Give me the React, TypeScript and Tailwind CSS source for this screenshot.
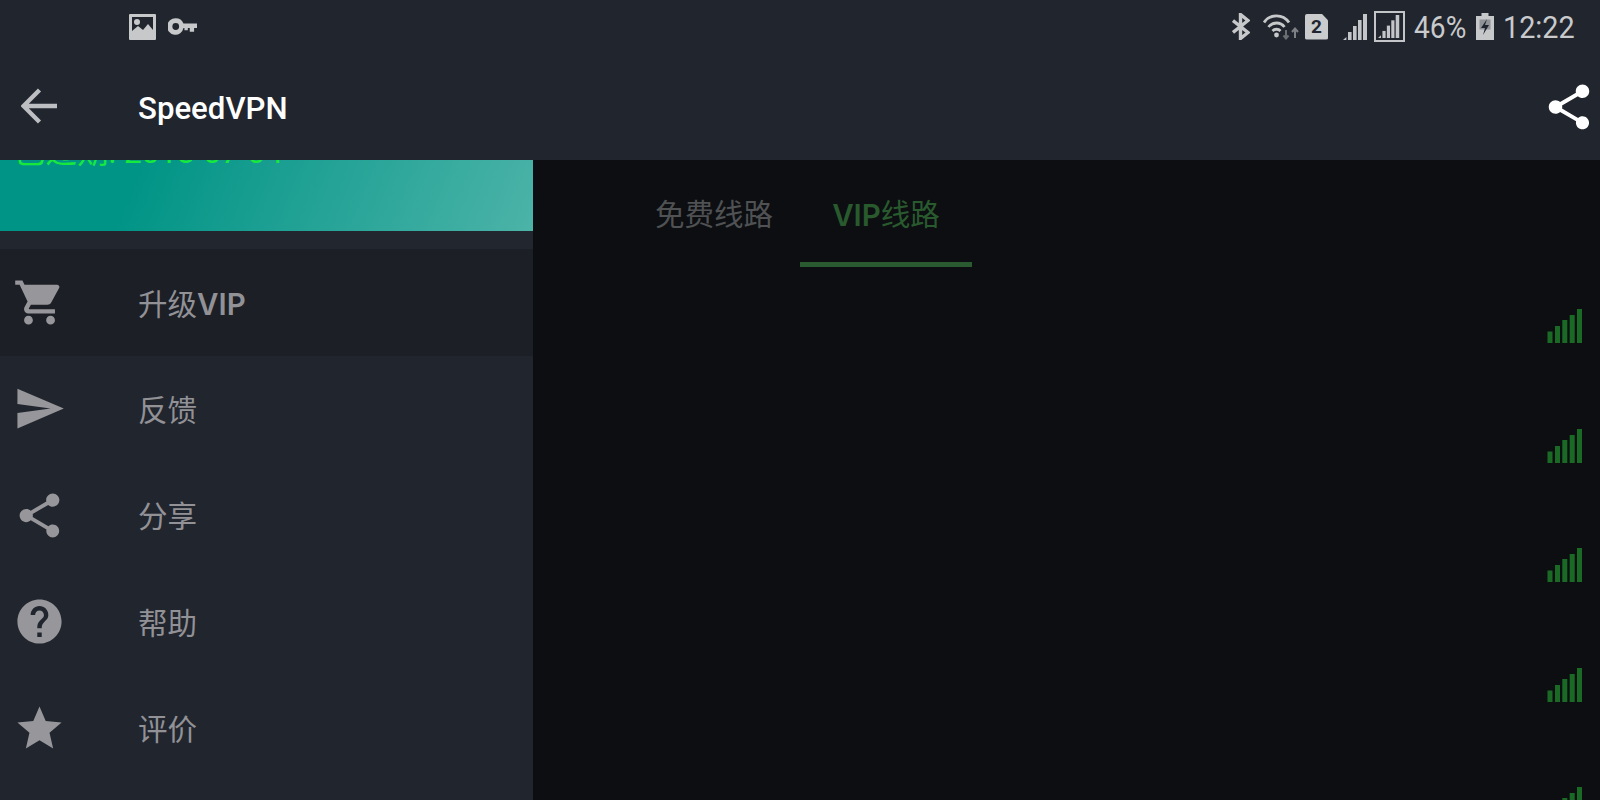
const sharePath = "M18 16.08c-.76 0-1.44.3-1.96.77L8.91 12.7c.05-.23.09-.46.09-.7s-.04-.47-.09-.7l7.05-4.11c.54.5 1.25.81 2.04.81 1.66 0 3-1.34 3-3s-1.34-3-3-3-3 1.34-3 3c0 .24.04.47.09.7L8.04 9.81C7.5 9.31 6.79 9 6 9c-1.66 0-3 1.34-3 3s1.34 3 3 3c.79 0 1.5-.31 2.04-.81l7.12 4.16c-.05.21-.08.43-.08.65 0 1.61 1.31 2.92 2.92 2.92 1.61 0 2.92-1.31 2.92-2.92s-1.31-2.92-2.92-2.92z"

const menu = [
    {
        label: "升级",
        extra: "VIP",
        active: true,
        path: "M7 18c-1.1 0-1.99.9-1.99 2S5.9 22 7 22s2-.9 2-2-.9-2-2-2zM1 2v2h2l3.6 7.59-1.35 2.45c-.16.28-.25.61-.25.96 0 1.1.9 2 2 2h12v-2H7.42c-.14 0-.25-.11-.25-.25l.03-.12.9-1.63h7.45c.75 0 1.41-.41 1.75-1.03l3.58-6.49c.08-.14.12-.31.12-.48 0-.55-.45-1-1-1H5.21l-.94-2H1zm16 16c-1.1 0-1.99.9-1.99 2s.89 2 1.99 2 2-.9 2-2-.9-2-2-2z",
    },
    { label: "反馈", path: "M2.01 21L23 12 2.01 3 2 10l15 2-15 2z" },
    { label: "分享", path: sharePath },
    {
        label: "帮助",
        path: "M12 2C6.48 2 2 6.48 2 12s4.48 10 10 10 10-4.48 10-10S17.52 2 12 2zm1 17h-2v-2h2v2zm2.07-7.75l-.9.92C13.45 12.9 13 13.5 13 15h-2v-.5c0-1.1.45-2.1 1.17-2.83l1.24-1.26c.37-.36.59-.86.59-1.41 0-1.1-.9-2-2-2s-2 .9-2 2H8c0-2.21 1.79-4 4-4s4 1.79 4 4c0 .88-.36 1.68-.93 2.25z",
    },
    { label: "评价", path: "M12 17.27L18.18 21l-1.64-7.03L22 9.24l-7.19-.61L12 2 9.19 8.63 2 9.24l5.46 4.73L5.82 21z" },
]

const SignalBars = () => (
    <svg width="36" height="34" viewBox="0 0 36 34" className="shrink-0">
        <g fill="#1a6a25">
            <rect x="0.5" y="22.5" width="5" height="11.5" />
            <rect x="8" y="17" width="5" height="17" />
            <rect x="15.3" y="11" width="5" height="23" />
            <rect x="22.7" y="6" width="5" height="28" />
            <rect x="30" y="0" width="5" height="34" />
        </g>
    </svg>
)

const TinySignal = ({ size }: { size: number }) => (
    <svg width={size} height={size} viewBox="0 0 26 26">
        <g fill="#c3c5c8">
            <path d="M0 26l3.400-3v3z" />
            <rect x="5" y="18" width="3.600" height="8" />
            <rect x="10" y="12" width="3.600" height="14" />
            <rect x="15" y="6" width="3.600" height="20" />
            <rect x="20" y="0" width="4" height="26" />
        </g>
    </svg>
)

const StatusBar = () => (
    <div className="flex h-[53px] items-center pl-[129px] pr-[25px]">
        <svg width="27" height="26" viewBox="0 0 27 26" fill="#c6c8ca">
            <path fillRule="evenodd" d="M1 0h25a1 1 0 0 1 1 1v24a1 1 0 0 1-1 1H1a1 1 0 0 1-1-1V1a1 1 0 0 1 1-1zm2 3v14l6-5 5 4 5-6 5 6V3z" />
            <circle cx="8" cy="8" r="3" />
        </svg>
        <svg width="29" height="17" viewBox="0 0 30 17" className="ml-[12px]" fill="#c6c8ca">
            <path fillRule="evenodd" d="M8 0a8.500 8.500 0 0 1 8 5.500h14V10h-3v4h-4.500v-4h-2v2.500h-3.500V10H16a8.500 8.500 0 1 1-8-10zm0 5a3.500 3.500 0 1 0 0 7 3.500 3.500 0 0 0 0-7z" />
        </svg>
        <div className="flex-1" />
        <svg width="18" height="27" viewBox="0 0 18 27" fill="none" stroke="#c6c8ca" strokeWidth="3.400">
            <path d="M1 7.500l15 12-7.500 6V1.500l7.500 6-15 12" />
        </svg>
        <svg width="37" height="26" viewBox="0 0 37 26" fill="none" className="ml-[13px]">
            <g stroke="#c6c8ca" strokeWidth="2.800">
                <path d="M1 8.500a15 15 0 0 1 25 0" />
                <path d="M5.500 13a10 10 0 0 1 16 0" />
                <path d="M9.500 17a5.500 5.500 0 0 1 8 0" />
            </g>
            <circle cx="13.500" cy="21" r="2.400" fill="#c6c8ca" />
            <path d="M23 16v8M20.500 21.500l2.500 3 2.500-3" stroke="#6a6d72" strokeWidth="2" />
            <path d="M32 24v-9M29 18l3-3.500 3 3.500" stroke="#7e8185" strokeWidth="2" />
        </svg>
        <div className="relative ml-[5px] flex h-[26px] w-[23px] items-center justify-center rounded-[2px] bg-[#c9cbcd] [clip-path:polygon(0_0,72%_0,100%_26%,100%_100%,0_100%)]">
            <span className="text-[19px] font-bold leading-none text-[#20242e]">2</span>
        </div>
        <div className="ml-[15px] h-[26px]">
            <TinySignal size={26} />
        </div>
        <div className="ml-[5px] flex h-[31px] w-[31px] items-center justify-center border-2 border-[#c3c5c8]">
            <TinySignal size={23} />
        </div>
        <div className="ml-[9px] w-[52px] text-[32px] leading-none text-[#c8cacc] origin-left scale-x-[0.88] whitespace-nowrap">46%</div>
        <svg width="18" height="27" viewBox="0 0 18 27" className="ml-[10px]">
            <path d="M5.500 0h7v3H18v24H0V3h5.500z" fill="#c6c8ca" />
            <path d="M3.500 6.500h11v10h-11z" fill="#8f9296" />
            <path d="M11 6L5 15h4l-2 7 6-10H9z" fill="#20242e" />
        </svg>
        <div className="ml-[9px] w-[72px] text-[32px] leading-none text-[#c8cacc] origin-left scale-x-[0.9] whitespace-nowrap">12:22</div>
    </div>
)

const App = () => {
    return (
        <div className="flex h-[800px] w-[1600px] flex-col overflow-hidden bg-[#0c0e12] font-['Roboto','Noto_Sans_CJK_SC',sans-serif]">
            <div className="h-[160px] shrink-0 bg-[#21252e]">
                <StatusBar />
                <div className="flex h-[107px] items-center pl-[21px] pr-[7px]">
                    <svg width="36" height="36" viewBox="0 0 36 36" fill="none" stroke="#bcbec1" strokeWidth="4.400" className="-mt-[2px] shrink-0">
                        <path d="M2.500 18H36M18.500 2L2.500 18l16 16" />
                    </svg>
                    <div className="ml-[81px] flex-1 pt-[5px] text-[31.200px] font-medium text-white">SpeedVPN</div>
                    <svg width="54" height="54" viewBox="0 0 24 24" fill="#ffffff" className="-mr-[3px]">
                        <path d={sharePath} />
                    </svg>
                </div>
            </div>
            <div className="flex min-h-0 flex-1">
                <div className="w-[533px] shrink-0 bg-[#21252e]">
                    <div className="h-[71px] overflow-hidden bg-[linear-gradient(112deg,#009486_25%,#4cb3a8_100%)] pl-[14px]">
                        <div className="-mt-[24px] text-[31.500px] leading-[34px] text-[#18e83c]">已过期: 2018-07-04</div>
                    </div>
                    <div className="h-[18px] bg-[#22262f]" />
                    {menu.map((item) => (
                        <div
                            key={item.label}
                            className={`flex h-[106.500px] items-center pl-[13px] ${item.active ? "bg-[#1c1f26]" : ""}`}
                        >
                            <svg width="53" height="53" viewBox="0 0 24 24" fill="#96969b" className="shrink-0">
                                <path d={item.path} />
                            </svg>
                            <div className="ml-[72px] pt-[4px] text-[29.500px] text-[#919196]">
                                {item.label}
                                {item.extra && <span className="font-['Inter'] font-semibold">{item.extra}</span>}
                            </div>
                        </div>
                    ))}
                </div>
                <div className="min-w-0 flex-1">
                    <div className="flex h-[107px] pl-[95px]">
                        <div className="flex w-[172px] items-center justify-center pt-[4px] text-[29.500px] text-[#4f5152]">免费线路</div>
                        <div className="flex w-[172px] items-center justify-center border-b-[5px] border-[#2a5a2f] pt-[9px] text-[29.500px] text-[#295a2e]">
                            <span className="font-['Inter'] font-semibold">VIP</span>线路
                        </div>
                    </div>
                    <div className="mt-[42px] flex flex-col items-end gap-[85.500px] pr-[17px]">
                        <SignalBars />
                        <SignalBars />
                        <SignalBars />
                        <SignalBars />
                        <SignalBars />
                    </div>
                </div>
            </div>
        </div>
    )
}

export default App
